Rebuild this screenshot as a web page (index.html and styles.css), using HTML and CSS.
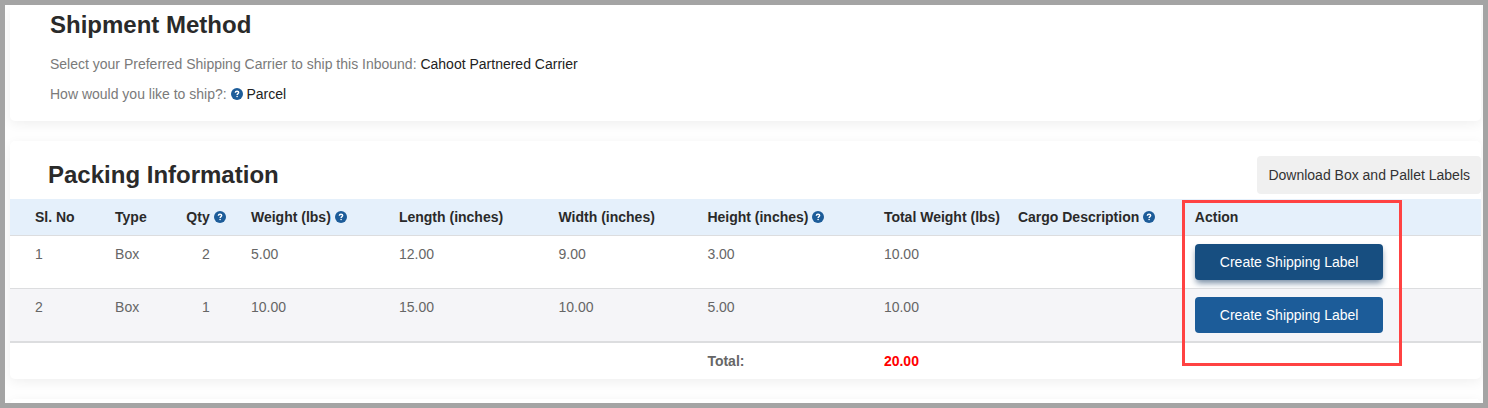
FILE: index.html
```html
<!DOCTYPE html>
<html lang="en">
<head>
<meta charset="utf-8">
<title>Shipment</title>
<link rel="stylesheet" href="styles.css">
</head>
<body>
<svg class="sprite" aria-hidden="true">
  <symbol id="help" viewBox="0 0 12 12">
    <circle cx="6" cy="6" r="6" fill="#1c5c99"/>
    <path d="M4.3 4.8C4.4 3.8 5 3.3 6 3.3C7 3.3 7.7 3.8 7.7 4.6C7.7 5.6 6.1 5.6 6.1 6.9" fill="none" stroke="#fff" stroke-width="1.4"/>
    <circle cx="6.1" cy="8.5" r="0.8" fill="#fff"/>
  </symbol>
</svg>
<main class="page">
  <section class="card method">
    <h2 class="title">Shipment Method</h2>
    <p class="line">Select your Preferred Shipping Carrier to ship this Inbound: <span class="value">Cahoot Partnered Carrier</span></p>
    <p class="line">How would you like to ship?: <svg class="help"><use href="#help"/></svg> <span class="value">Parcel</span></p>
  </section>

  <section class="card">
    <header class="card-head">
      <h2 class="title">Packing Information</h2>
      <button class="download" type="button">Download Box and Pallet Labels</button>
    </header>
    <table class="packing">
      <colgroup>
        <col class="c-no"><col class="c-type"><col class="c-qty"><col class="c-weight"><col class="c-length">
        <col class="c-width"><col class="c-height"><col class="c-total"><col class="c-cargo"><col>
      </colgroup>
      <thead>
        <tr>
          <th scope="col">Sl. No</th>
          <th scope="col">Type</th>
          <th scope="col" class="center">Qty <svg class="help"><use href="#help"/></svg></th>
          <th scope="col">Weight (lbs) <svg class="help"><use href="#help"/></svg></th>
          <th scope="col">Length (inches)</th>
          <th scope="col">Width (inches)</th>
          <th scope="col">Height (inches) <svg class="help"><use href="#help"/></svg></th>
          <th scope="col">Total Weight (lbs)</th>
          <th scope="col">Cargo Description <svg class="help"><use href="#help"/></svg></th>
          <th scope="col" class="action">Action<span class="highlight"></span></th>
        </tr>
      </thead>
      <tbody>
        <tr>
          <td>1</td><td>Box</td><td class="center">2</td><td>5.00</td><td>12.00</td><td>9.00</td><td>3.00</td><td>10.00</td><td></td>
          <td><button class="create active" type="button">Create Shipping Label</button></td>
        </tr>
        <tr>
          <td>2</td><td>Box</td><td class="center">1</td><td>10.00</td><td>15.00</td><td>10.00</td><td>5.00</td><td>10.00</td><td></td>
          <td><button class="create" type="button">Create Shipping Label</button></td>
        </tr>
      </tbody>
      <tfoot>
        <tr>
          <td colspan="6"></td><td>Total:</td><td class="sum">20.00</td><td colspan="2"></td>
        </tr>
      </tfoot>
    </table>
  </section>

  <section class="card next"></section>
</main>
</body>
</html>
```
FILE: styles.css
```css
* { box-sizing: border-box; }

body {
  margin: 0;
  font: 14px/20px "Liberation Sans", Arial, sans-serif;
  color: #666;
  background: #fff;
}

.sprite { position: absolute; width: 0; height: 0; }

.page {
  display: flex;
  flex-direction: column;
  gap: 20px;
  height: 100vh;
  overflow: hidden;
  padding: 0 2px 0 5px;
  border: 5px solid #a4a4a4;
  background: #fefefe;
}

.card {
  flex: none;
  border-radius: 5px;
  background: #fff;
  box-shadow: 0 3px 12px rgba(0, 0, 0, 0.06);
}

.method {
  padding: 4px 40px 17px;
  border-radius: 0 0 5px 5px;
}

.next { height: 40px; }

.title {
  margin: 0;
  font-size: 24px;
  line-height: 32px;
  color: #2a2a2a;
}

.line { margin: 13px 0 0; color: #7a7a7a; }
.line + .line { margin-top: 10px; }
.value { color: #222; }

.help {
  width: 12px;
  height: 12px;
  vertical-align: -1px;
}

.card-head {
  display: flex;
  align-items: center;
  justify-content: space-between;
  padding: 15px 0 5px 38px;
}

button { font: inherit; border: 0; cursor: pointer; }

.download {
  padding: 9px 11px;
  border-radius: 4px;
  background: #f0f0f0;
  color: #333;
}

.packing {
  width: 100%;
  table-layout: fixed;
  border-spacing: 0;
}

.c-no { width: 6.53%; }
.c-type { width: 4.89%; }
.c-qty { width: 4.35%; }
.c-weight { width: 10.06%; }
.c-length { width: 10.85%; }
.c-width { width: 10.12%; }
.c-height { width: 12%; }
.c-total { width: 9.11%; }
.c-cargo { width: 12.03%; }

th, td {
  padding: 8px 0 8px 9px;
  text-align: left;
  vertical-align: top;
  white-space: nowrap;
}

th:first-child, td:first-child { padding-left: 25px; }
.center { padding: 8px 8px 8px 0; text-align: center; }

th { background: #e5f0fb; color: #2a2a2a; }
tbody td { border-top: 1px solid #dcdddf; }
tbody tr:nth-child(even) { background: #f5f5f8; }
tfoot td { border-top: 2px solid #dcdddf; font-weight: bold; }
tfoot .sum { color: #f00; }

.create {
  display: block;
  padding: 8px 25px;
  border-radius: 4px;
  background: #1c5c99;
  color: #fff;
}

.create.active {
  background: #174e80;
  box-shadow: 0 4px 6px -1px rgba(23, 60, 100, 0.6);
}

.action { position: relative; }

.highlight {
  position: absolute;
  z-index: 1;
  top: 1px;
  left: -4px;
  width: 220px;
  height: 166px;
  border: 3px solid #ff4242;
  pointer-events: none;
}
```
